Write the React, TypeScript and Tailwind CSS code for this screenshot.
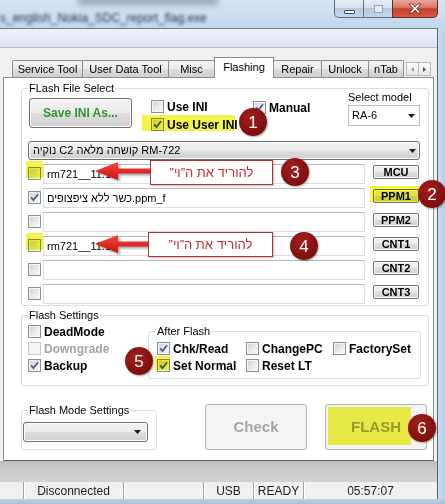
import React from "react";

const SANS = "font-['Liberation_Sans','DejaVu_Sans',Arial,sans-serif]";
const BTN =
  "border border-[#707070] bg-[linear-gradient(180deg,#f2f2f2_0%,#ebebeb_48%,#dddddd_52%,#cfcfcf_100%)] shadow-[inset_0_0_0_1px_#fbfbfb]";

function Caret() {
  return (
    <svg width="7" height="4" viewBox="0 0 7 4">
      <path d="M0 0h7L3.5 4z" fill="#1a1a1a" />
    </svg>
  );
}

function Check({ checked = false, disabled = false }: { checked?: boolean; disabled?: boolean }) {
  return (
    <span
      className={`flex h-[13px] w-[13px] shrink-0 items-center justify-center border ${
        disabled
          ? "border-[#c9c9c9] bg-[#f5f5f5]"
          : "border-[#8e8f8f] bg-[linear-gradient(135deg,#cdd0d4_0%,#e8e9eb_55%,#fbfbfb_100%)] shadow-[inset_0_0_0_1px_#f4f4f4]"
      }`}
    >
      {checked && (
        <svg width="9" height="9" viewBox="0 0 9 9">
          <path d="M1.1 4.3 3.5 7 8 1.3" fill="none" stroke="#4a5c8e" strokeWidth="1.8" />
        </svg>
      )}
    </span>
  );
}

function Option({
  label,
  checked,
  disabled,
  className = "",
}: {
  label: string;
  checked?: boolean;
  disabled?: boolean;
  className?: string;
}) {
  return (
    <div className={`flex h-[17px] items-center gap-[3px] ${className}`}>
      <Check checked={checked} disabled={disabled} />
      <span className={`whitespace-nowrap text-[12px] font-bold leading-none ${disabled ? "text-[#a3a3a3]" : "text-black"}`}>
        {label}
      </span>
    </div>
  );
}

function Group({
  title,
  className = "",
  legendClass = "ml-[6px]",
  children,
}: {
  title: string;
  className?: string;
  legendClass?: string;
  children: React.ReactNode;
}) {
  return (
    <fieldset className={`rounded-[3px] border border-[#d5dfe5] ${className}`}>
      <legend className={`px-[1px] text-[11px] leading-[13px] text-black ${legendClass}`}>{title}</legend>
      {children}
    </fieldset>
  );
}

function TitleBar() {
  return (
    <div className="relative flex h-[28px] overflow-hidden bg-[linear-gradient(180deg,#d4e4f3_0%,#c9ddf0_60%,#c0d7ec_100%)]">
      <div className="absolute left-[78px] top-[-5px] h-[10px] w-[140px] bg-[#6f7f90] opacity-60 blur-[3px]" />
      <div className="w-[230px] shrink-0 overflow-hidden pt-[9px] whitespace-nowrap text-[12px] text-[#2c3a4a] blur-[1.4px]">
        s_english_Nokia_SDC_report_flag.exe
      </div>
      <div className="ml-auto mr-[7px] flex h-[18px]">
        <div className="flex w-[30px] items-center justify-center rounded-bl-[5px] border border-t-0 border-[#5c6f88] bg-[linear-gradient(180deg,#e9eff7_0%,#d2deeb_45%,#b7c8db_50%,#c8d7e8_100%)]">
          <span className="mt-[6px] h-[4px] w-[11px] rounded-[1px] border border-[#3d4a5c] bg-white" />
        </div>
        <div className="-ml-px flex w-[30px] items-center justify-center border border-t-0 border-[#5c6f88] bg-[linear-gradient(180deg,#e9eff7_0%,#d2deeb_45%,#b7c8db_50%,#c8d7e8_100%)]">
          <span className="h-[8px] w-[9px] border border-[#96a5b8] bg-[#e4ebf3]" />
        </div>
        <div className="-ml-px flex w-[46px] items-center justify-center rounded-br-[5px] border border-t-0 border-[#6a2a22] bg-[linear-gradient(180deg,#e8a698_0%,#d97a68_42%,#c5402c_52%,#d35a45_100%)]">
          <svg width="16" height="11" viewBox="0 0 16 11">
            <path d="M2 1h3.5L8 4l2.5-3H14l-4.2 4.5L14 10h-3.5L8 7l-2.5 3H2l4.2-4.5z" fill="#fff" stroke="#5a1f18" strokeWidth="0.8" />
          </svg>
        </div>
      </div>
    </div>
  );
}

const TABS: { label: string; w: string; active?: boolean }[] = [
  { label: "Service Tool", w: "w-[71px]" },
  { label: "User Data Tool", w: "w-[87px]" },
  { label: "Misc", w: "w-[47px]" },
  { label: "Flashing", w: "w-[60px]", active: true },
  { label: "Repair", w: "w-[49px]" },
  { label: "Unlock", w: "w-[48px]" },
  { label: "nTab", w: "w-[36px]" },
];

function TabStrip() {
  return (
    <div className="flex h-[20px] items-end pl-[12px]">
      {TABS.map((t, i) =>
        t.active ? (
          <div
            key={t.label}
            className={`relative z-10 -mb-px flex h-[21px] ${t.w} -ml-px items-start justify-center border border-b-0 border-[#898c95] bg-white pt-[4px] text-[11px] leading-none`}
          >
            {t.label}
          </div>
        ) : (
          <div
            key={t.label}
            className={`flex h-[17px] ${t.w} ${i ? "-ml-px" : ""} items-center justify-center rounded-t-[2px] border border-b-0 border-[#898c95] bg-[linear-gradient(180deg,#f2f2f2_0%,#ebebeb_48%,#dddddd_52%,#cfcfcf_100%)] text-[11px] leading-none`}
          >
            {t.label}
          </div>
        )
      )}
      <div className="mb-[1px] ml-[2px] flex h-[14px]">
        <div className="flex w-[13px] items-center justify-center border border-[#b5b9c0] bg-[linear-gradient(#fbfbfb,#e6e6e6)]">
          <svg width="3" height="5" viewBox="0 0 3 5">
            <path d="M3 0v5L0 2.5z" fill="#9aa0a8" />
          </svg>
        </div>
        <div className="-ml-px flex w-[13px] items-center justify-center border border-[#b5b9c0] bg-[linear-gradient(#fbfbfb,#e6e6e6)]">
          <svg width="3" height="5" viewBox="0 0 3 5">
            <path d="M0 0v5l3-2.5z" fill="#4a5060" />
          </svg>
        </div>
      </div>
    </div>
  );
}

const FILES: { tag: string; checked?: boolean; text?: React.ReactNode }[] = [
  { tag: "MCU", text: "rm721__11.10" },
  { tag: "PPM1", checked: true, text: <span dir="ltr">כשר ללא ציפצופים.ppm_f</span> },
  { tag: "PPM2" },
  { tag: "CNT1", text: "rm721__11.10" },
  { tag: "CNT2" },
  { tag: "CNT3" },
];

function FileSelect() {
  return (
    <Group title="FLash File Select" className="ml-[17px] mt-[4px] w-[408px] pb-[1px]">
      <div className="flex items-start">
        <button className={`ml-[7px] mt-[3px] h-[30px] w-[103px] rounded-[3px] text-[12px] font-bold text-[#2f962f] ${BTN}`}>
          Save INI As...
        </button>
        <div className="ml-[19px] mt-[3px] flex w-[102px] flex-col gap-[1px]">
          <Option label="Use INI" />
          <Option label="Use User INI" checked />
        </div>
        <div className="mt-[4px] w-[95px]">
          <Option label="Manual" checked />
        </div>
        <div className="-mt-[4px] flex w-[72px] flex-col">
          <span className="whitespace-nowrap text-[11px] leading-[13px]">Select model</span>
          <div className="mt-[1px] flex h-[21px] items-center justify-between border border-[#b9bcc2] bg-white pl-[3px] pr-[4px] text-[11px]">
            <span>RA-6</span>
            <Caret />
          </div>
        </div>
      </div>
      <div className={`ml-[6px] mt-[8px] flex h-[19px] w-[392px] items-center justify-between rounded-[3px] pl-[4px] pr-[3px] text-[11px] ${BTN}`}>
        <span dir="ltr">נוקיה C2 קושחה מלאה RM-722</span>
        <Caret />
      </div>
      <div className="ml-[6px] mt-[4px] flex flex-col gap-[4px]">
        {FILES.map((f) => (
          <div key={f.tag} className="flex h-[20px] items-center">
            <div className="-mt-[2px]">
              <Check checked={f.checked} />
            </div>
            <div className="ml-[2px] flex h-[20px] w-[322px] items-center overflow-hidden whitespace-nowrap border border-[#d9dde3] border-t-[#b3b6bc] bg-white pl-[3px] text-[11px]">
              {f.text}
            </div>
            <button className={`-mt-[4px] ml-[8px] h-[14px] w-[46px] rounded-[2px] text-[11px] font-bold leading-none ${BTN}`}>
              {f.tag}
            </button>
          </div>
        ))}
      </div>
    </Group>
  );
}

function FlashSettings() {
  return (
    <Group title="Flash Settings" className="ml-[17px] mt-[3px] w-[408px] pb-[6px]">
      <div className="flex items-start">
        <div className="ml-[6px] mt-[1px] flex w-[120px] flex-col">
          <Option label="DeadMode" />
          <Option label="Downgrade" disabled />
          <Option label="Backup" checked />
        </div>
        <Group title="After Flash" className="mt-[3px] w-[273px] pb-[4px] pt-[2px]" legendClass="ml-[7px]">
          <div className="grid grid-cols-[89px_87px_1fr] pl-[8px]">
            <Option label="Chk/Read" checked />
            <Option label="ChangePC" />
            <Option label="FactorySet" />
            <Option label="Set Normal" checked />
            <Option label="Reset LT" />
          </div>
        </Group>
      </div>
    </Group>
  );
}

function FlashRow() {
  return (
    <div className="ml-[17px] flex items-start">
      <Group title="Flash Mode Settings" className="mt-[18px] w-[136px] pb-[7px]">
        <div className={`ml-[1px] mt-[5px] flex h-[20px] w-[125px] items-center justify-end rounded-[3px] pr-[6px] ${BTN}`}>
          <Caret />
        </div>
      </Group>
      <button className="ml-[48px] mt-[18px] h-[46px] w-[102px] rounded-[3px] border border-[#adb2b5] bg-[#f4f4f4] text-[15px] font-bold text-[#a6a6a6]">
        Check
      </button>
      <button className="ml-[18px] mt-[18px] h-[46px] w-[102px] rounded-[3px] border border-[#adb2b5] bg-[#f4f4f4] text-[15px] font-bold text-[#a3a39a]">
        FLASH
      </button>
    </div>
  );
}

function StatusBar() {
  const seg = "flex h-full items-center justify-center border-l border-[#a7a7a7] shadow-[inset_1px_0_0_#ffffff]";
  return (
    <div className="flex h-[17px] text-[12px] leading-none text-[#1e1e1e]">
      <div className="w-[23px]" />
      <div className={`${seg} w-[100px]`}>Disconnected</div>
      <div className={`${seg} w-[80px]`} />
      <div className={`${seg} w-[50px]`}>USB</div>
      <div className={`${seg} w-[50px]`}>READY</div>
      <div className={`${seg} flex-1`}>05:57:07</div>
    </div>
  );
}

function Arrow() {
  return (
    <svg width="57" height="22" viewBox="0 0 57 22" className="drop-shadow-[2px_2px_1px_rgba(0,0,0,0.35)]">
      <defs>
        <linearGradient id="arrowRed" x1="0" y1="0" x2="0" y2="1">
          <stop offset="0" stopColor="#f4473a" />
          <stop offset="1" stopColor="#c9140f" />
        </linearGradient>
      </defs>
      <path d="M0 11 23 2v6.5h34v5H23V20z" fill="url(#arrowRed)" />
    </svg>
  );
}

function Marker({ n, className }: { n: number; className: string }) {
  return (
    <div
      className={`absolute flex h-[28px] w-[28px] items-center justify-center rounded-full bg-[radial-gradient(circle_at_40%_35%,#a3201f_0%,#83110f_60%,#6c0b0a_100%)] text-[17px] leading-none text-white shadow-[1px_1px_2px_rgba(0,0,0,0.35)] ${className}`}
    >
      {n}
    </div>
  );
}

function Callout({ className }: { className: string }) {
  return (
    <div
      dir="rtl"
      className={`absolute flex h-[25px] items-center justify-center border border-[#ad3333] bg-white text-[13px] leading-none text-[#c42a2c] shadow-[1px_1px_2px_rgba(0,0,0,0.25)] ${className}`}
    >
      להוריד את ה”וי”
    </div>
  );
}

export default function App() {
  return (
    <div className={`relative h-[504px] w-[445px] overflow-hidden bg-[#f0f0f0] text-black ${SANS}`}>
      <TitleBar />
      <div className="flex h-[471px]">
        <div className="flex w-[438px] flex-col border-r border-[#56667a]">
          <div className="h-[20px] border-y border-b-[#b8bed3] border-t-[#6d7b8d] bg-[linear-gradient(180deg,#eef0f9_0%,#dfe2f1_100%)]" />
          <div className="h-[9px]" />
          <TabStrip />
          <div className="ml-[3px] h-[384px] w-[431px] border border-[#898c95] border-b-[#5e5e5e] bg-white">
            <FileSelect />
            <FlashSettings />
            <FlashRow />
          </div>
          <div className="h-[21px] bg-[linear-gradient(180deg,#bdbdbd_0%,#cbcbcb_40%,#d2d2d2_100%)]" />
          <StatusBar />
        </div>
        <div className="w-[7px] bg-[linear-gradient(90deg,#c9dcef,#b9d1ea)]" />
      </div>
      <div className="h-[5px] bg-[linear-gradient(180deg,#bcd0e4,#a9c0d8)]" />

      {/* highlighter marks */}
      <div className="pointer-events-none absolute left-[142px] top-[115px] h-[16px] w-[93px] bg-[#f3f34a] mix-blend-multiply" />
      <div className="pointer-events-none absolute left-[26px] top-[161px] h-[17px] w-[17px] bg-[#f3f34a] mix-blend-multiply" />
      <div className="pointer-events-none absolute left-[26px] top-[233px] h-[17px] w-[17px] bg-[#f3f34a] mix-blend-multiply" />
      <div className="pointer-events-none absolute left-[370px] top-[186px] h-[16px] w-[50px] bg-[#f3f34a] mix-blend-multiply" />
      <div className="pointer-events-none absolute left-[155px] top-[356px] h-[14px] w-[15px] bg-[#f3f34a] mix-blend-multiply" />
      <div className="pointer-events-none absolute left-[328px] top-[407px] h-[38px] w-[83px] bg-[#f3f34a] mix-blend-multiply" />

      {/* arrows and notes */}
      <div className="absolute left-[95px] top-[160px]">
        <Arrow />
      </div>
      <div className="absolute left-[95px] top-[233px]">
        <Arrow />
      </div>
      <Callout className="left-[150px] top-[160px] w-[123px]" />
      <Callout className="left-[148px] top-[232px] w-[125px]" />

      <Marker n={1} className="left-[239px] top-[108px]" />
      <Marker n={2} className="left-[418px] top-[180px]" />
      <Marker n={3} className="left-[281px] top-[158px]" />
      <Marker n={4} className="left-[290px] top-[232px]" />
      <Marker n={5} className="left-[125px] top-[347px]" />
      <Marker n={6} className="left-[408px] top-[414px]" />
    </div>
  );
}
